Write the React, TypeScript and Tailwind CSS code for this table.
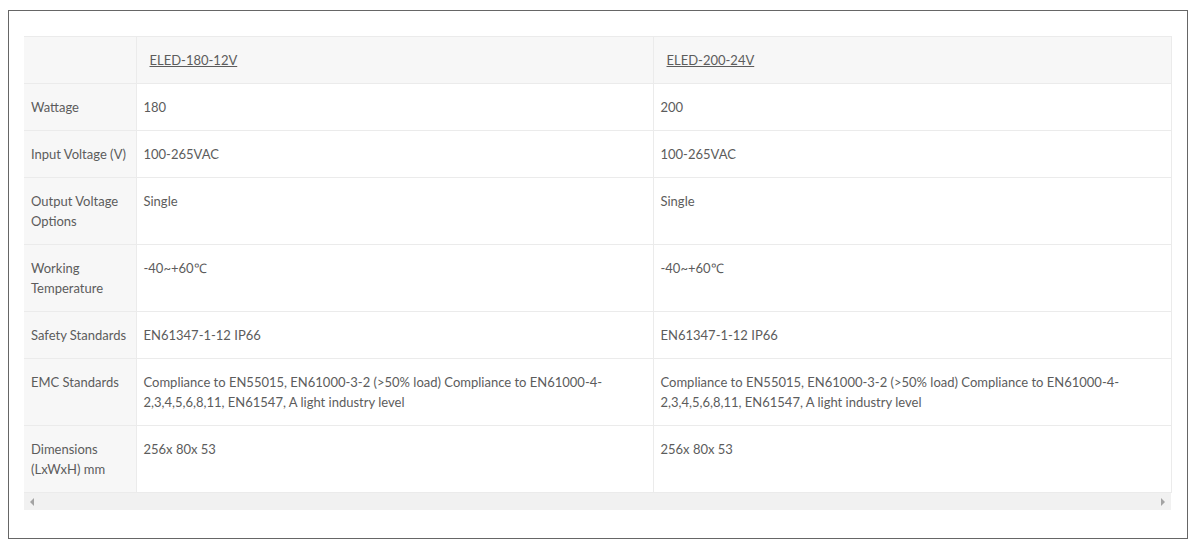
import React from 'react';

const models = ['ELED-180-12V', 'ELED-200-24V'];

const specs: { label: React.ReactNode; values: string[] }[] = [
  { label: 'Wattage', values: ['180', '200'] },
  { label: 'Input Voltage (V)', values: ['100-265VAC', '100-265VAC'] },
  { label: <>Output Voltage<br />Options</>, values: ['Single', 'Single'] },
  { label: <>Working<br />Temperature</>, values: ['-40~+60℃', '-40~+60℃'] },
  { label: 'Safety Standards', values: ['EN61347-1-12 IP66', 'EN61347-1-12 IP66'] },
  {
    label: 'EMC Standards',
    values: [
      'Compliance to EN55015, EN61000-3-2 (>50% load) Compliance to EN61000-4-2,3,4,5,6,8,11, EN61547, A light industry level',
      'Compliance to EN55015, EN61000-3-2 (>50% load) Compliance to EN61000-4-2,3,4,5,6,8,11, EN61547, A light industry level',
    ],
  },
  { label: <>Dimensions<br />(LxWxH) mm</>, values: ['256x 80x 53', '256x 80x 53'] },
];

export default function App() {
  return (
    <div className="bg-white w-[1194px] h-[544px] pt-[10px] pl-2" style={{ fontFamily: 'Lato, "Open Sans", sans-serif' }}>
      <div className="w-[1180px] h-[529px] border border-[#666] px-[15px] pt-[25px]">
        <div className="w-[1147px]">
          <table className="w-full border-collapse text-[13px] leading-5 text-[#5c5c5c] table-fixed">
            <colgroup>
              <col className="w-[112px]" />
              <col className="w-[517px]" />
              <col className="w-[518px]" />
            </colgroup>
            <thead>
              <tr className="bg-[#f7f7f7]">
                <th className="border border-[#ebebeb] border-l-0 h-[47px]"></th>
                {models.map((m) => (
                  <th key={m} className="border border-[#ebebeb] py-[13px] pl-[13px] pr-[7px] text-left font-normal align-top">
                    <a href="#" className="underline text-[#5c5c5c]">{m}</a>
                  </th>
                ))}
              </tr>
            </thead>
            <tbody>
              {specs.map((row, i) => (
                <tr key={i}>
                  <td className="bg-[#f7f7f7] border border-[#ebebeb] border-l-0 py-[13px] px-[7px] align-top whitespace-nowrap">
                    {row.label}
                  </td>
                  {row.values.map((v, j) => (
                    <td key={j} className="border border-[#ebebeb] py-[13px] px-[7px] align-top">
                      {v}
                    </td>
                  ))}
                </tr>
              ))}
            </tbody>
          </table>
          {/* horizontal scrollbar */}
          <div className="h-[17px] bg-[#f1f1f1] flex items-center justify-between px-[6px]">
            <svg width="5" height="8" viewBox="0 0 5 8"><path d="M4 0 L0 4 L4 8 Z" fill="#a3a3a3" /></svg>
            <svg width="5" height="8" viewBox="0 0 5 8"><path d="M1 0 L5 4 L1 8 Z" fill="#a3a3a3" /></svg>
          </div>
        </div>
      </div>
    </div>
  );
}
